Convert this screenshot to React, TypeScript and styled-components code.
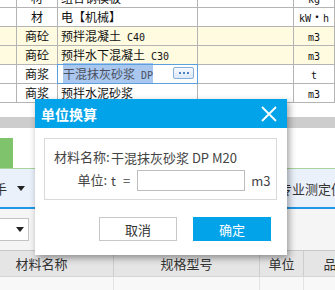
import React from "react";
import styled, { createGlobalStyle } from "styled-components";

const Global = createGlobalStyle`
  html, body { margin: 0; padding: 0; background: #fff; }
  body { width: 335px; height: 290px; overflow: hidden; font-family: "Noto Sans CJK SC", "Noto Sans", sans-serif; }
  #root { width: 335px; height: 290px; overflow: hidden; }
`;

const Page = styled.div`
  position: relative;
  width: 335px;
  height: 290px;
  overflow: hidden;
  background: #fff;
  display: flex;
  flex-direction: column;
`;

/* ---------- top grid ---------- */
const TopGrid = styled.div`
  margin-top: -11px;
  display: flex;
  flex-direction: column;
  font-family: "Noto Sans CJK SC", sans-serif;
  font-size: 12px;
  color: #111;
`;

const GridRow = styled.div<{ $beige?: boolean }>`
  display: grid;
  grid-template-columns: 17px 41px 140px 96px 1fr;
  height: 19px;
  background: ${(p) => (p.$beige ? "#fffbe1" : "#fff")};
`;

const Cell = styled.div<{ $center?: boolean; $selected?: boolean }>`
  position: relative;
  box-sizing: border-box;
  border-right: 1px solid #b4b4b4;
  border-bottom: 1px solid #b4b4b4;
  display: flex;
  align-items: center;
  justify-content: ${(p) => (p.$center ? "center" : "flex-start")};
  padding-left: ${(p) => (p.$center ? "0" : p.$selected ? "5px" : "3px")};
  white-space: nowrap;
  overflow: ${(p) => (p.$selected ? "visible" : "hidden")};
  line-height: 1;
  &::after {
    content: "";
    display: ${(p) => (p.$selected ? "block" : "none")};
    position: absolute;
    top: -1px;
    left: -1px;
    right: -1px;
    bottom: -1px;
    border: 1px solid #5ba0dc;
    pointer-events: none;
  }
`;

const CellText = styled.span`
  white-space: pre;
`;

const Mono = styled.span`
  font-family: "DejaVu Sans Mono", "Liberation Mono", monospace;
  font-size: 10px;
  white-space: pre;
`;

const Highlight = styled.span`
  background: #a9c7ef;
  color: #4a4f5e;
  padding: 2px 0 1px;
  white-space: pre;
`;

const DotsButton = styled.div`
  position: absolute;
  right: 3px;
  top: 2px;
  width: 21px;
  height: 12px;
  box-sizing: border-box;
  border: 1px solid #86afdb;
  border-radius: 2px;
  background: linear-gradient(#f6f9fd, #dce8f6);
  display: flex;
  align-items: center;
  justify-content: center;
  gap: 2px;
`;

const Dot = styled.i`
  width: 2px;
  height: 2px;
  background: #4d80c4;
`;

/* ---------- middle bands ---------- */
const WhiteGap = styled.div<{ $h: number }>`
  height: ${(p) => p.$h}px;
  flex: none;
`;

const GrayBand = styled.div`
  height: 11px;
  flex: none;
  background: #cdcdcd;
`;

const TabStrip = styled.div`
  height: 30px;
  flex: none;
  border-bottom: 1px solid #a9d69c;
  display: flex;
`;

const GreenTab = styled.div`
  width: 13px;
  background: #7fc46d;
`;

const Toolbar = styled.div`
  height: 38px;
  flex: none;
  background: #ebf1fb;
  border-bottom: 2px solid #1f96e6;
  display: flex;
  align-items: center;
  font-size: 13px;
  color: #333;
`;

const ToolLeft = styled.div`
  display: flex;
  align-items: center;
  margin-left: -6px;
  gap: 10px;
`;

const ToolRight = styled.div`
  margin-left: auto;
  width: 56px;
  overflow: hidden;
  white-space: nowrap;
`;

const FilterArea = styled.div`
  height: 41px;
  flex: none;
  background: #f5f5f5;
  display: flex;
  align-items: flex-start;
  padding-top: 9px;
  box-sizing: border-box;
`;

const Select = styled.div`
  margin-left: -2px;
  width: 31px;
  height: 23px;
  box-sizing: border-box;
  border: 1px solid #c4c4c4;
  background: #fff;
  display: flex;
  align-items: center;
  justify-content: flex-end;
  padding-right: 4px;
`;

const Caret = () => (
  <svg width="8" height="5" viewBox="0 0 8 5">
    <path d="M0 0 H8 L4 5 Z" fill="#222" />
  </svg>
);

/* ---------- bottom table ---------- */
const HeadRow = styled.div`
  margin-left: -30px;
  width: 400px;
  height: 27px;
  flex: none;
  box-sizing: border-box;
  border-top: 1px solid #c6c6c6;
  border-bottom: 1px solid #d6d6d6;
  background: #e5e5e5;
  display: grid;
  grid-template-columns: 144px 146px 44px 1fr;
  font-size: 13px;
  color: #333;
`;

const HeadCell = styled.div`
  border-right: 1px solid #cdcdcd;
  display: flex;
  align-items: center;
  justify-content: center;
  white-space: nowrap;
`;

const DataRow = styled.div`
  margin-left: -30px;
  width: 400px;
  height: 14px;
  flex: none;
  background: #f8f8f8;
  display: grid;
  grid-template-columns: 144px 146px 44px 1fr;
`;

const DataCell = styled.div`
  border-right: 1px solid #e3e3e3;
`;

/* ---------- dialog ---------- */
const Dialog = styled.div`
  position: absolute;
  left: 35px;
  top: 99px;
  width: 252px;
  height: 156px;
  background: #fff;
  box-shadow: 2px 3px 7px rgba(0, 0, 0, 0.38);
  display: flex;
  flex-direction: column;
  font-family: "Noto Sans CJK SC", "Noto Sans", sans-serif;
`;

const TitleBar = styled.div`
  height: 29px;
  flex: none;
  background: #03a3e9;
  color: #fff;
  display: flex;
  align-items: center;
  justify-content: space-between;
  padding: 0 10px 0 6px;
  font-size: 14px;
  font-weight: 700;
`;

const Body = styled.div`
  padding: 10px 10px 0 9px;
  display: flex;
  flex-direction: column;
`;

const GroupBox = styled.div`
  height: 62px;
  box-sizing: border-box;
  border: 1px solid #d9d9d9;
  padding: 9px 0 0 9px;
  display: grid;
  grid-template-columns: 53px 1fr;
  column-gap: 4px;
  row-gap: 5px;
  align-content: start;
  font-size: 13px;
  color: #444;
`;

const Label = styled.div`
  text-align: right;
  height: 18px;
  line-height: 18px;
  white-space: nowrap;
`;

const Value = styled.div`
  display: flex;
  align-items: center;
  white-space: nowrap;
  height: 18px;
`;

const InputRow = styled.div`
  display: flex;
  align-items: center;
  gap: 7px;
  height: 21px;
  margin-top: -1px;
  white-space: nowrap;
`;

const UnitText = styled.span`
  margin-left: -1px;
`;

const TextInput = styled.div`
  width: 108px;
  height: 21px;
  box-sizing: border-box;
  border: 1px solid #bdbdbd;
  background: #fff;
`;

const ButtonRow = styled.div`
  margin-top: 17px;
  padding-right: 6px;
  display: flex;
  justify-content: flex-end;
  gap: 16px;
`;

const Btn = styled.div<{ $primary?: boolean }>`
  width: 78px;
  height: 24px;
  box-sizing: border-box;
  display: flex;
  align-items: center;
  justify-content: center;
  font-size: 13px;
  background: ${(p) => (p.$primary ? "#03a3e9" : "#fff")};
  color: ${(p) => (p.$primary ? "#fff" : "#333")};
  border: 1px solid ${(p) => (p.$primary ? "#03a3e9" : "#c8c8c8")};
`;

const CloseIcon = () => (
  <svg width="16" height="16" viewBox="0 0 16 16">
    <path d="M1 1 L15 15 M15 1 L1 15" stroke="#fff" strokeWidth="1.8" />
  </svg>
);

type Row = { type: string; name: React.ReactNode; unit: React.ReactNode; beige?: boolean; selected?: boolean };

const rows: Row[] = [
  { type: "材", name: "组合钢模板", unit: <Mono>kg</Mono> },
  { type: "材", name: "电【机械】", unit: <><Mono>kW</Mono>・<Mono>h</Mono></> },
  { type: "商砼", name: <>预拌混凝土<Mono> C40</Mono></>, unit: <Mono>m3</Mono>, beige: true },
  { type: "商砼", name: <>预拌水下混凝土<Mono> C30</Mono></>, unit: <Mono>m3</Mono>, beige: true },
  { type: "商浆", name: <Highlight>干混抹灰砂浆<Mono> DP</Mono></Highlight>, unit: <Mono>t</Mono>, selected: true },
  { type: "商浆", name: "预拌水泥砂浆", unit: <Mono>m3</Mono> },
];

export default function App() {
  return (
    <>
      <Global />
      <Page>
        <TopGrid>
          {rows.map((r, i) => (
            <GridRow key={i} $beige={r.beige}>
              <Cell />
              <Cell $center>{r.type}</Cell>
              <Cell $selected={r.selected}>
                <CellText>{r.name}</CellText>
                {r.selected && (
                  <DotsButton>
                    <Dot />
                    <Dot />
                    <Dot />
                  </DotsButton>
                )}
              </Cell>
              <Cell />
              <Cell $center>
                <CellText>{r.unit}</CellText>
              </Cell>
            </GridRow>
          ))}
        </TopGrid>
        <WhiteGap $h={14} />
        <GrayBand />
        <WhiteGap $h={10} />
        <TabStrip>
          <GreenTab />
        </TabStrip>
        <Toolbar>
          <ToolLeft>
            <span>手</span>
            <Caret />
          </ToolLeft>
          <ToolRight>专业测定值</ToolRight>
        </Toolbar>
        <FilterArea>
          <Select>
            <Caret />
          </Select>
        </FilterArea>
        <HeadRow>
          <HeadCell>材料名称</HeadCell>
          <HeadCell>规格型号</HeadCell>
          <HeadCell>单位</HeadCell>
          <HeadCell>品牌</HeadCell>
        </HeadRow>
        <DataRow>
          <DataCell />
          <DataCell />
          <DataCell />
          <DataCell />
        </DataRow>

        <Dialog>
          <TitleBar>
            <span>单位换算</span>
            <CloseIcon />
          </TitleBar>
          <Body>
            <GroupBox>
              <Label>材料名称:</Label>
              <Value>干混抹灰砂浆 DP M20</Value>
              <Label>单位:</Label>
              <InputRow>
                <span>t</span>
                <span>=</span>
                <TextInput />
                <UnitText>m3</UnitText>
              </InputRow>
            </GroupBox>
            <ButtonRow>
              <Btn>取消</Btn>
              <Btn $primary>确定</Btn>
            </ButtonRow>
          </Body>
        </Dialog>
      </Page>
    </>
  );
}
